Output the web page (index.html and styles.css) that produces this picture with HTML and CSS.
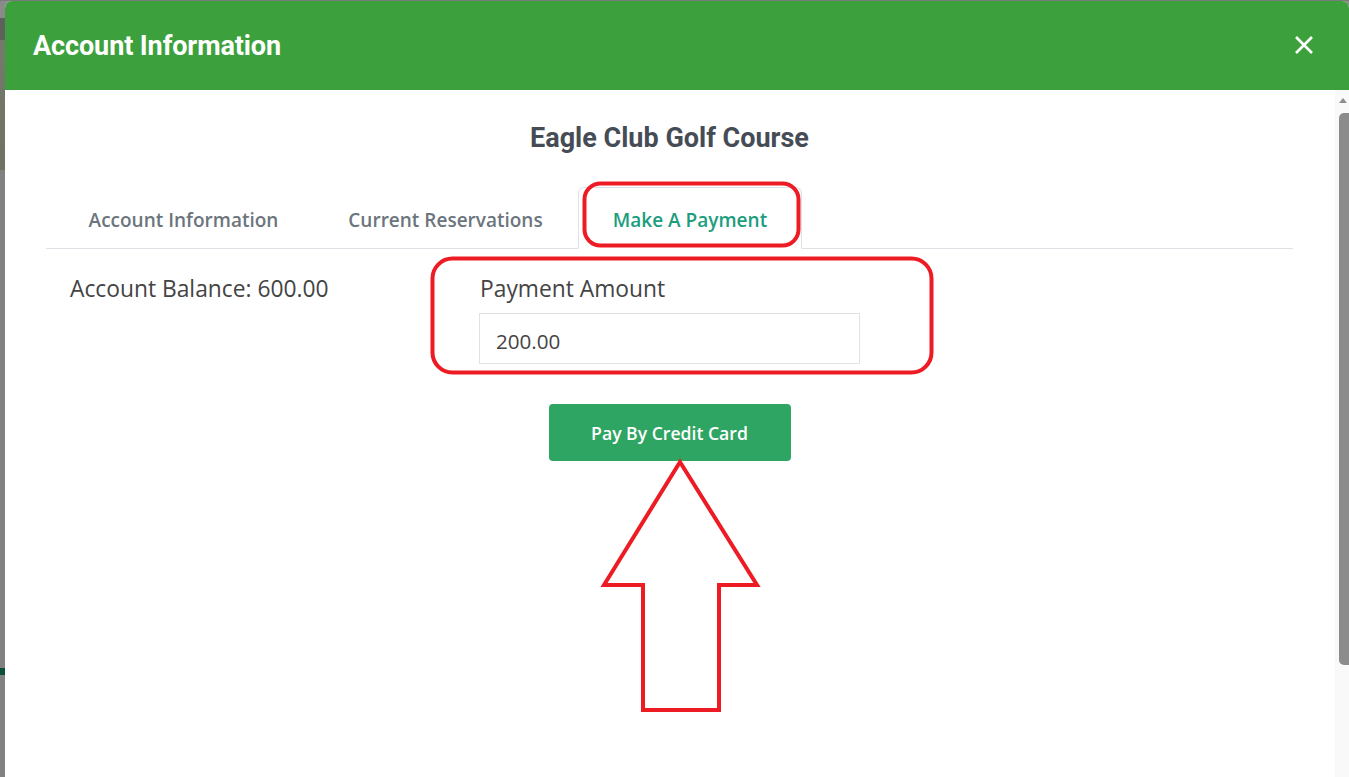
FILE: index.html
```html
<!DOCTYPE html>
<html lang="en">
<head>
<meta charset="utf-8">
<title>Account Information</title>
<link rel="stylesheet" href="styles.css">
</head>
<body>
<div class="modal">
  <header class="modal-header">
    <h1 class="modal-title">Account Information</h1>
    <button class="close" aria-label="Close">
      <svg width="20" height="20" viewBox="0 0 20 20"><path d="M2 2 L18 18 M18 2 L2 18" stroke="#fff" stroke-width="2.6" stroke-linecap="butt" fill="none"/></svg>
    </button>
  </header>
  <div class="modal-main">
    <div class="modal-body">
      <h2 class="course">Eagle Club Golf Course</h2>
      <ul class="tabs">
        <li class="tab tab-1">Account Information</li>
        <li class="tab tab-2">Current Reservations</li>
        <li class="tab tab-3 active">Make A Payment</li>
      </ul>
      <div class="pane">
        <div class="balance">Account Balance: 600.00</div>
        <div class="field">
          <label class="field-label" for="amt">Payment Amount</label>
          <input id="amt" class="field-input" type="text" value="200.00">
        </div>
      </div>
      <div class="actions">
        <button class="pay-btn">Pay By Credit Card</button>
      </div>
    </div>
    <div class="scrollbar">
      <span class="scroll-arrow"></span>
      <span class="scroll-thumb"></span>
    </div>
  </div>
</div>
<svg class="annotations" width="1349" height="777" viewBox="0 0 1349 777">
  <rect x="584.5" y="183.5" width="214" height="62" rx="16" ry="16" fill="none" stroke="#ed1c24" stroke-width="4"/>
  <rect x="432.5" y="258.5" width="499" height="114" rx="20" ry="20" fill="none" stroke="#ed1c24" stroke-width="4"/>
  <polygon points="680,462 757,585 719,585 719,710 643,710 643,585 604,585" fill="none" stroke="#ed1c24" stroke-width="4" stroke-linejoin="miter"/>
</svg>
</body>
</html>
```
FILE: styles.css
```css
* { box-sizing: border-box; }

html, body {
  margin: 0;
  height: 100%;
  overflow: hidden;
}

body {
  background: linear-gradient(to bottom,
    #8a8a8a 0, #8a8a8a 18px,
    #5e605c 18px, #5e605c 40px,
    #767a6c 40px, #6d7262 170px,
    #818181 170px, #818181 668px,
    #0b4f3a 668px, #0b4f3a 675px,
    #818181 675px, #818181 100%);
  padding: 1px 0 0 5px;
  font-family: "Open Sans", "Liberation Sans", sans-serif;
  position: relative;
}

body::before {
  content: "";
  position: absolute;
  left: 0; right: 0; top: 0;
  height: 1px;
  background: #7a7a7a;
}

.modal {
  height: 100%;
  display: flex;
  flex-direction: column;
  background: #fff;
  border-radius: 7px 7px 0 0;
  overflow: hidden;
}

.modal-header {
  flex: 0 0 89px;
  background: #3ca13c;
  display: flex;
  align-items: center;
  justify-content: space-between;
  padding: 0 35px 0 28px;
}

.modal-title {
  margin: 0;
  font-family: Roboto, "Liberation Sans", sans-serif;
  font-weight: 700;
  font-size: 27px;
  color: #fff;
  line-height: 30px;
  letter-spacing: -0.1px;
  padding-top: 1px;
}

.close {
  background: none;
  border: 0;
  padding: 0;
  width: 20px;
  height: 20px;
  display: flex;
  margin-top: -2px;
}

.modal-main {
  flex: 1;
  display: flex;
  min-height: 0;
}

.modal-body {
  flex: 1;
  padding: 33px 42px 0 41px;
}

.course {
  margin: 0;
  text-align: center;
  font-family: Roboto, "Liberation Sans", sans-serif;
  font-weight: 700;
  font-size: 27px;
  line-height: 30px;
  color: #454c55;
}

.tabs {
  list-style: none;
  margin: 34px 0 0;
  padding: 0 0 0 8px;
  display: flex;
  border-bottom: 1px solid #dee2e6;
  height: 62px;
}

.tab {
  height: 62px;
  margin-bottom: -1px;
  margin-right: 2px;
  display: flex;
  align-items: center;
  justify-content: center;
  font-size: 19px;
  font-weight: 600;
  color: #6c757d;
  border: 1px solid transparent;
  border-radius: 6px 6px 0 0;
  padding-top: 3px;
}

.tab-1 { width: 259px; }
.tab-2 { width: 261px; }
.tab-3 { width: 224px; }

.tab.active {
  color: #1b9d7e;
  background: #fff;
  border-color: #dee2e6 #dee2e6 #fff;
}

.pane {
  display: flex;
  padding: 25px 0 0 24px;
}

.balance {
  width: 409px;
  font-size: 22.8px;
  line-height: 30px;
  color: #444;
}

.field {
  width: 381px;
  display: flex;
  flex-direction: column;
}

.field-label {
  font-size: 22.8px;
  line-height: 30px;
  color: #444;
  padding-left: 1px;
}

.field-input {
  margin-top: 9px;
  height: 51px;
  border: 1px solid #e2e2e2;
  padding: 5px 16px 0;
  font-family: "Open Sans", "Liberation Sans", sans-serif;
  font-size: 20.6px;
  color: #444;
  outline: none;
  background: #fff;
}

.actions {
  display: flex;
  justify-content: center;
  padding-top: 40px;
}

.pay-btn {
  width: 242px;
  height: 57px;
  background: #2ea562;
  border: 0;
  border-radius: 4px;
  color: #fff;
  font-family: "Open Sans", "Liberation Sans", sans-serif;
  font-size: 17.6px;
  font-weight: 600;
  padding: 0;
}

.scrollbar {
  flex: 0 0 12px;
  background: #f9f9f9;
  display: flex;
  flex-direction: column;
  align-items: center;
  padding-top: 8px;
}

.scroll-arrow {
  width: 0;
  height: 0;
  border-left: 4px solid transparent;
  border-right: 4px solid transparent;
  border-bottom: 5px solid #8e8e8e;
  margin-left: 2px;
}

.scroll-thumb {
  margin-top: 10px;
  margin-left: 4px;
  width: 10px;
  height: 552px;
  background: #8c8c8c;
  border-radius: 5px 0 0 5px;
}

.annotations {
  position: absolute;
  left: 0;
  top: 0;
  pointer-events: none;
}
```
